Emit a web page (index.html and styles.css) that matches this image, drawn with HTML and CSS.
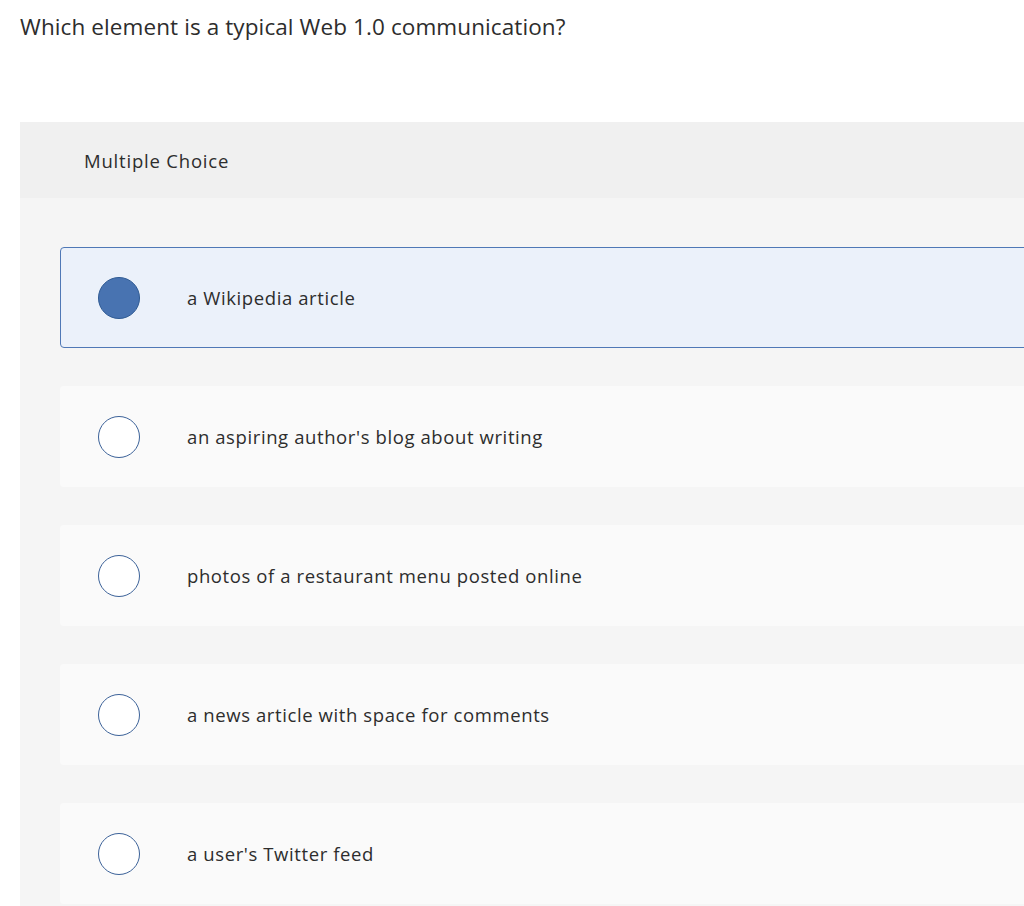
FILE: index.html
```html
<!DOCTYPE html>
<html lang="en">
<head>
	<meta charset="UTF-8">
	<title>Question</title>
	<link rel="stylesheet" href="styles.css">
</head>
<body>
	<div class="question">Which element is a typical Web 1.0 communication?</div>

	<div class="panel">
		<div class="panel-head">Multiple Choice</div>
		<div class="choices">
			<div class="choice selected">
				<span class="radio"></span>
				<span class="label">a Wikipedia article</span>
			</div>
			<div class="choice">
				<span class="radio"></span>
				<span class="label">an aspiring author's blog about writing</span>
			</div>
			<div class="choice">
				<span class="radio"></span>
				<span class="label">photos of a restaurant menu posted online</span>
			</div>
			<div class="choice">
				<span class="radio"></span>
				<span class="label">a news article with space for comments</span>
			</div>
			<div class="choice">
				<span class="radio"></span>
				<span class="label">a user's Twitter feed</span>
			</div>
		</div>
	</div>
</body>
</html>
```

FILE: styles.css
```css
html,body{
	margin:0;
	padding:0;
	background:#fff;
	overflow:hidden;
}
body{
	font-family: "Open Sans", Lato, Arial, sans-serif;
	color:#2d2d2d;
	width:1024px;
	height:906px;
}
.question{
	font-size:22.5px;
	letter-spacing:0.1px;
	line-height:28px;
	padding:13px 0 0 20px;
	height:109px;
}
.panel{
	margin-left:20px;
	width:1100px;
	background-color:#f5f5f5;
	height:900px;
}
.panel-head{
	background-color:#f0f0f0;
	height:76px;
	line-height:78px;
	padding-left:64px;
	font-size:18.5px;
	letter-spacing:0.8px;
}
.choices{
	display:flex;
	flex-direction:column;
	gap:39px;
	padding:49px 0 0 40px;
}
.choice{
	display:flex;
	align-items:center;
	height:101px;
	box-sizing:border-box;
	background-color:#fafafa;
	border:1px solid transparent;
	border-radius:4px;
	padding-left:37px;
}
.choices .choice + .choice{
	margin-top:-1px;
}
.choice.selected{
	background-color:#ebf1fa;
	border-color:#4f78b6;
}
.radio{
	width:40px;
	height:40px;
	border:1.5px solid #3c6299;
	border-radius:50%;
	background:#fff;
	flex:none;
}
.choice.selected .radio{
	background:#4873b1;
	border-color:#2e5a93;
}
.label{
	margin-left:47px;
	font-size:18.5px;
	letter-spacing:0.6px;
}
```
